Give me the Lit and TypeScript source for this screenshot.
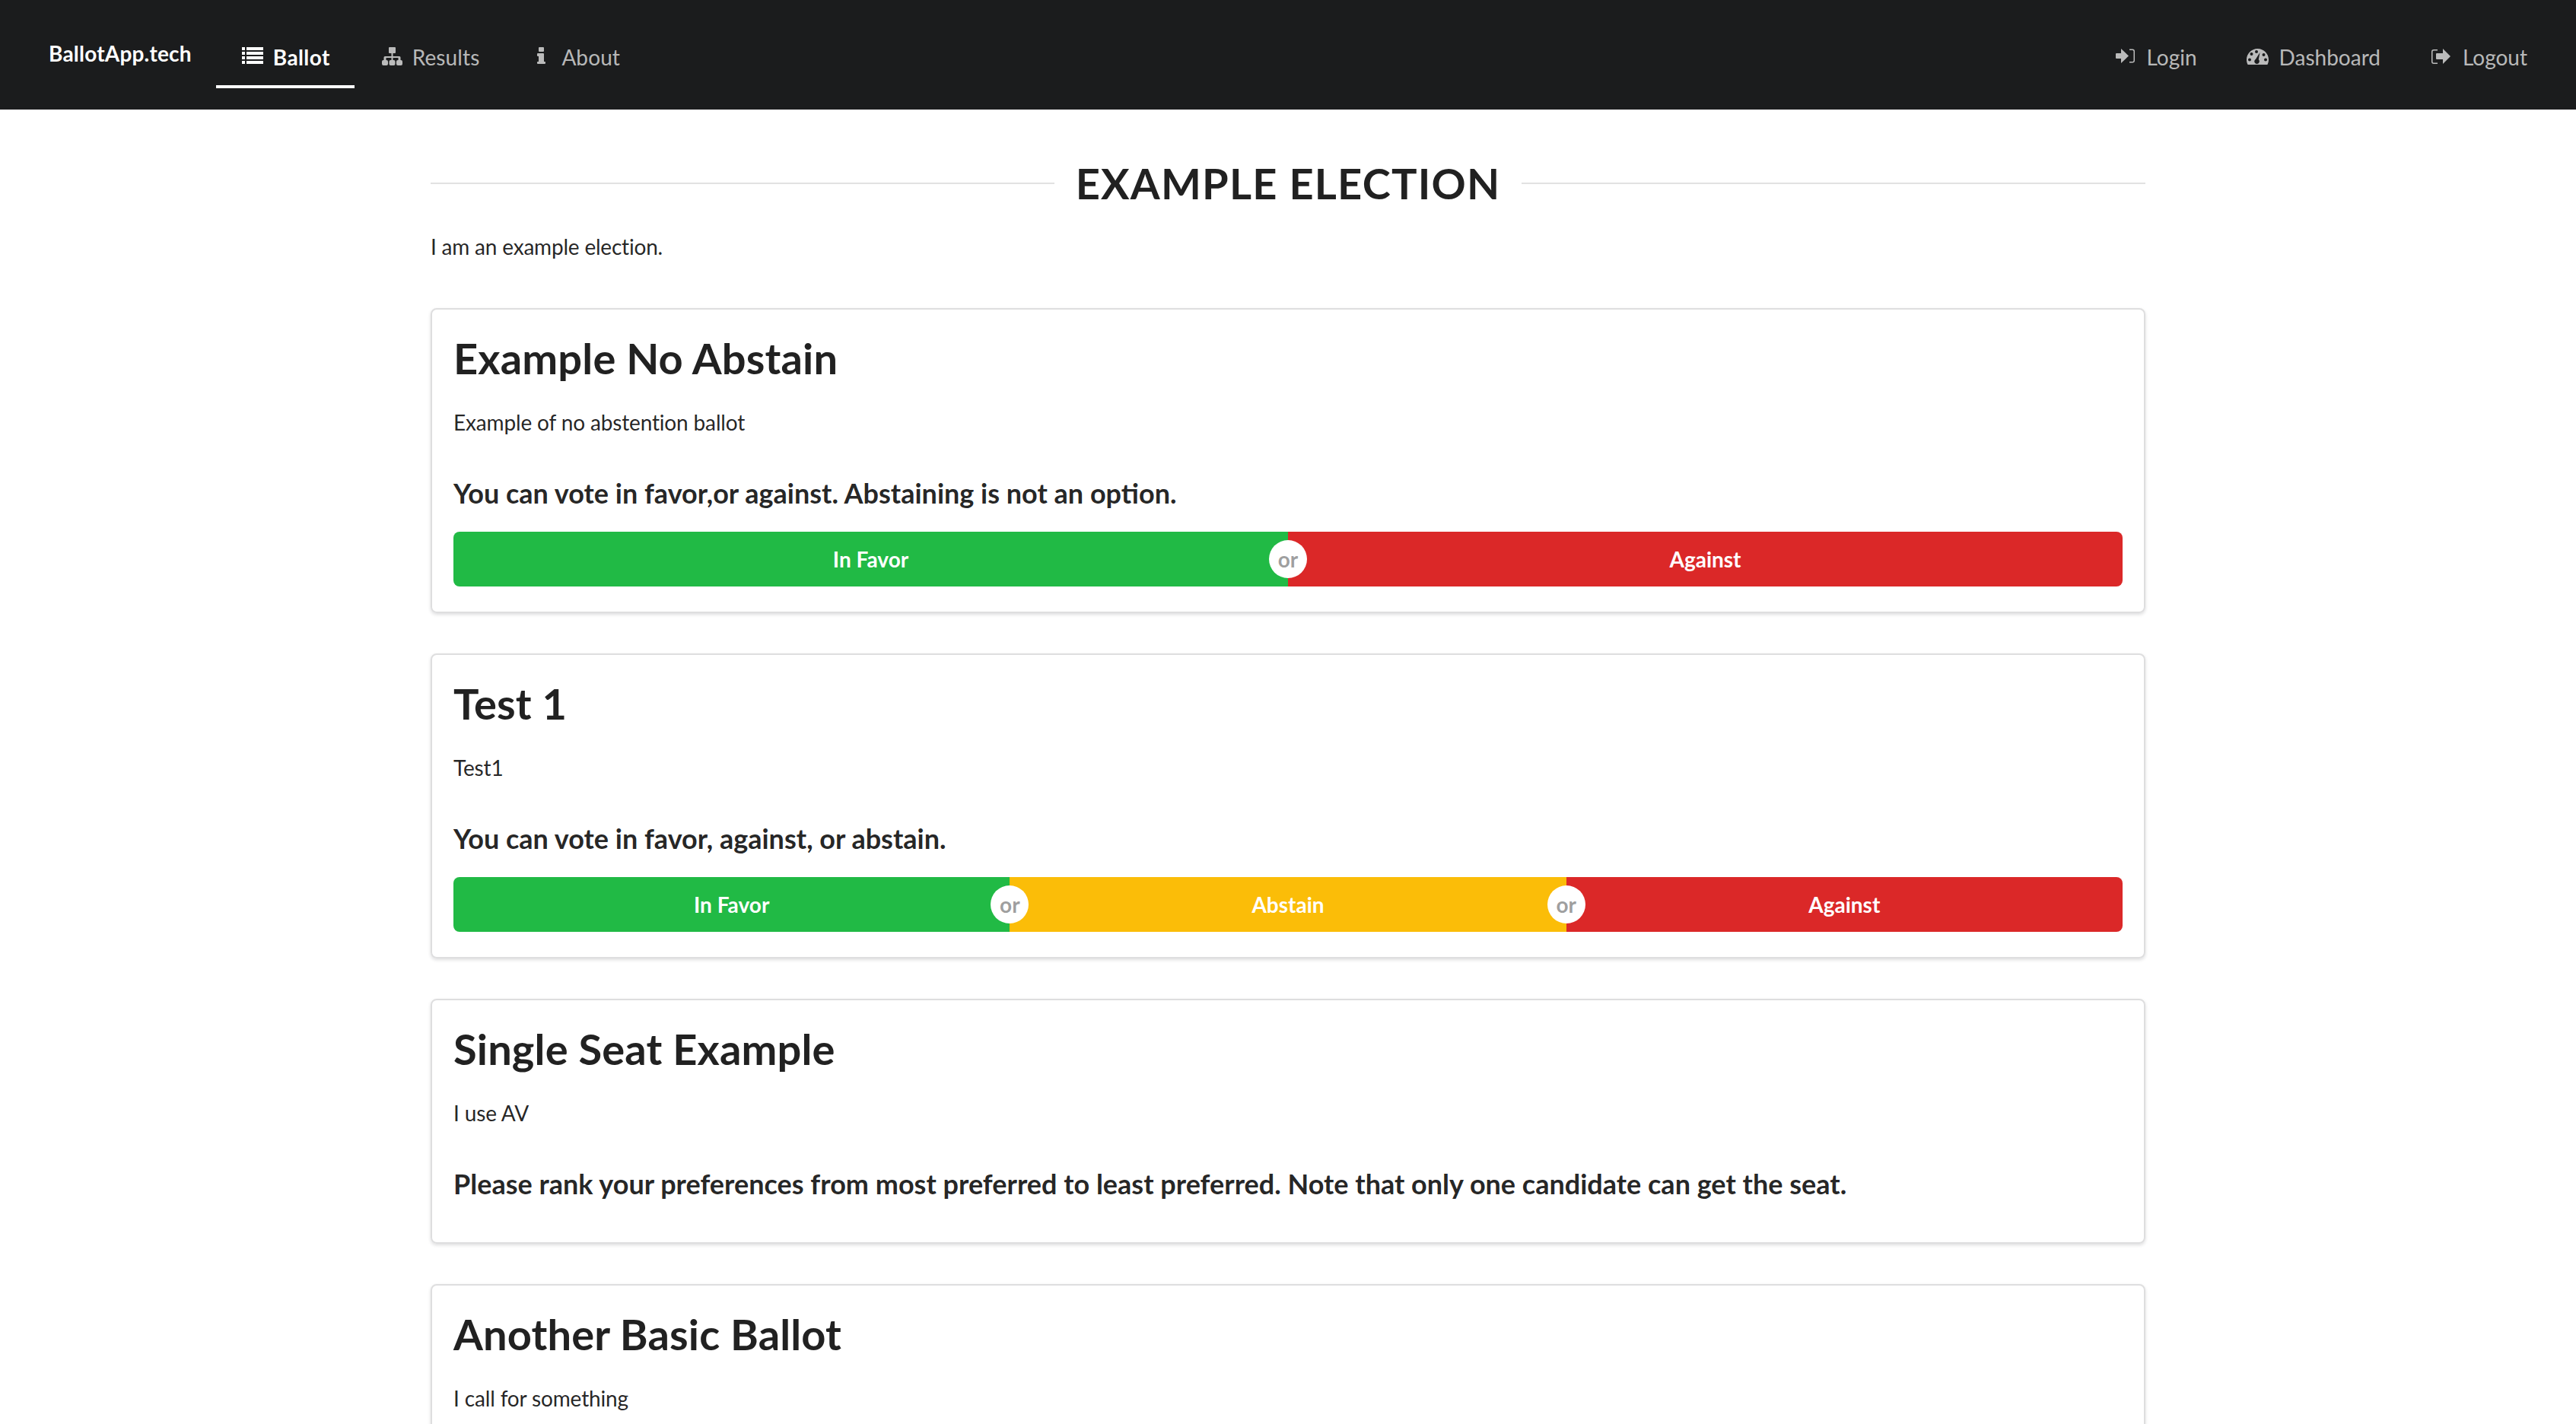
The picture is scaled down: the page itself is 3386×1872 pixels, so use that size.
import { LitElement, css, html, svg } from 'lit'
import { customElement } from 'lit/decorators.js'

const icons: Record<string, unknown> = {
  list: svg`<path d="M2 1h4v4H2zM8 1h22v4H8zM2 7h4v4H2zM8 7h22v4H8zM2 13h4v4H2zM8 13h22v4H8zM2 19h4v4H2zM8 19h22v4H8z"/>`,
  sitemap: svg`<path d="M13 1h7a1 1 0 0 1 1 1v6a1 1 0 0 1-1 1h-2.500v4H26a1.500 1.500 0 0 1 1.500 1.500V18h.5a2 2 0 0 1 2 2v3a2 2 0 0 1-2 2h-4a2 2 0 0 1-2-2v-3a2 2 0 0 1 2-2h.5v-3h-7v3h1a2 2 0 0 1 2 2v3a2 2 0 0 1-2 2h-4a2 2 0 0 1-2-2v-3a2 2 0 0 1 2-2h1v-3H8.500v3H9a2 2 0 0 1 2 2v3a2 2 0 0 1-2 2H5a2 2 0 0 1-2-2v-3a2 2 0 0 1 2-2h.5v-3.500A1.500 1.500 0 0 1 7 13h8.500V9H13a1 1 0 0 1-1-1V2a1 1 0 0 1 1-1z"/>`,
  info: svg`<path d="M14 1h5a1 1 0 0 1 1 1v4a1 1 0 0 1-1 1h-5a1 1 0 0 1-1-1V2a1 1 0 0 1 1-1zM12 9h7a1 1 0 0 1 1 1v10h1a1 1 0 0 1 1 1v1a1 1 0 0 1-1 1H12a1 1 0 0 1-1-1v-1a1 1 0 0 1 1-1h1v-7h-1a1 1 0 0 1-1-1v-2a1 1 0 0 1 1-1z"/>`,
  signin: svg`<path d="M4 9h6V3l10 9.500L10 22v-6H4a1 1 0 0 1-1-1v-5a1 1 0 0 1 1-1z"/><path d="M21 3.500h4a3 3 0 0 1 3 3v12a3 3 0 0 1-3 3h-4V20h4a1.500 1.500 0 0 0 1.500-1.500v-12A1.500 1.500 0 0 0 25 5h-4z"/>`,
  dashboard: svg`<path fill-rule="evenodd" d="M14.500 3C6.500 3 0 9.500 0 17.500c0 2.400.6 4.600 1.600 6.500h25.800c1-1.900 1.600-4.100 1.600-6.500C29 9.500 22.500 3 14.500 3zM13 5a2 2 0 1 1 0 4 2 2 0 0 1 0-4zM6.500 8a2 2 0 1 1 0 4 2 2 0 0 1 0-4zM22.500 9a2 2 0 1 1 0 4 2 2 0 0 1 0-4zM4 15.500a2 2 0 1 1 0 4 2 2 0 0 1 0-4zM25 15.500a2 2 0 1 1 0 4 2 2 0 0 1 0-4zM17.500 8l-1.700 9.300a3.300 3.300 0 1 1-3.800-.5z"/>`,
  signout: svg`<path d="M2 7a3 3 0 0 1 3-3h5v1.500H5A1.500 1.500 0 0 0 3.500 7v13A1.500 1.500 0 0 0 5 21.500h5V23H5a3 3 0 0 1-3-3z"/><path d="M9 9h8V3l10 10-10 10v-6H9a1 1 0 0 1-1-1v-6a1 1 0 0 1 1-1z"/>`,
}

const navLeft = [
  { label: 'Ballot', icon: 'list', active: true },
  { label: 'Results', icon: 'sitemap' },
  { label: 'About', icon: 'info' },
]

const navRight = [
  { label: 'Login', icon: 'signin' },
  { label: 'Dashboard', icon: 'dashboard' },
  { label: 'Logout', icon: 'signout' },
]

const ballots = [
  {
    title: 'Example No Abstain',
    desc: 'Example of no abstention ballot',
    prompt: 'You can vote in favor,or against. Abstaining is not an option.',
    choices: ['favor', 'against'],
  },
  {
    title: 'Test 1',
    desc: 'Test1',
    prompt: 'You can vote in favor, against, or abstain.',
    choices: ['favor', 'abstain', 'against'],
  },
  {
    title: 'Single Seat Example',
    desc: 'I use AV',
    prompt: 'Please rank your preferences from most preferred to least preferred. Note that only one candidate can get the seat.',
    choices: [],
  },
  {
    title: 'Another Basic Ballot',
    desc: 'I call for something',
    prompt: '',
    choices: [],
  },
]

const choiceLabels: Record<string, string> = {
  favor: 'In Favor',
  abstain: 'Abstain',
  against: 'Against',
}

@customElement('app-root')
export class AppRoot extends LitElement {
  static styles = css`
    :host {
      display: block;
      height: 1872px;
      overflow: hidden;
      background: #fff;
      font-family: Lato, 'Liberation Sans', sans-serif;
      font-size: 28px;
      line-height: 40px;
      color: rgba(0, 0, 0, 0.87);
    }
    .menu {
      display: flex;
      align-items: flex-start;
      height: 144px;
      padding: 0 32px;
      box-sizing: border-box;
      background: #1b1c1d;
    }
    .brand {
      margin-top: 28px;
      height: 84px;
      padding: 0 32px;
      display: flex;
      align-items: center;
      font-weight: 700;
      letter-spacing: 0.2px;
      color: #fff;
    }
    .item {
      margin-top: 28px;
      height: 88px;
      padding: 10px 32px 0;
      box-sizing: border-box;
      display: flex;
      align-items: center;
      border-bottom: 4px solid transparent;
      letter-spacing: 0.1px;
      color: rgba(255, 255, 255, 0.7);
    }
    .item + .item {
      margin-left: 1px;
    }
    .item.active {
      color: #fff;
      font-weight: 700;
      letter-spacing: 0.4px;
      border-bottom-color: #fff;
    }
    .item svg {
      width: 33px;
      height: 28px;
      margin-right: 10px;
      fill: currentColor;
    }
    .spacer {
      flex: 1;
    }
    .nav-right {
      display: flex;
    }
    .nav-right .item {
      letter-spacing: 0;
    }
    .page {
      width: 2254px;
      margin: 0 auto;
    }
    .title {
      display: flex;
      align-items: center;
      gap: 28px;
      margin: 0;
      padding-top: 64px;
      font-size: 56px;
      line-height: 66px;
      font-weight: 700;
      letter-spacing: 1.2px;
      color: rgba(0, 0, 0, 0.87);
      text-transform: uppercase;
    }
    .title::before,
    .title::after {
      content: '';
      flex: 1;
      height: 2px;
      background: #e2e2e2;
    }
    .intro {
      margin: 30px 0 0;
      letter-spacing: -0.2px;
    }
    .card {
      margin-top: 53px;
      padding: 28px;
      border: 2px solid #dededf;
      border-radius: 8px;
      box-shadow: 0 2px 4px rgba(34, 36, 38, 0.15);
    }
    .intro + .card {
      margin-top: 61px;
    }
    .card h2 {
      margin: 3px 0 0;
      font-size: 56px;
      line-height: 66px;
      font-weight: 700;
      letter-spacing: 0.15px;
    }
    .card p {
      margin: 31px 0 0;
      letter-spacing: -0.15px;
    }
    .card h3 {
      margin: 46px 0 22px;
      font-size: 36px;
      line-height: 54px;
      font-weight: 700;
    }
    .choices {
      display: flex;
      position: relative;
      height: 72px;
      margin: 24px 0 5px;
    }
    .card h3:has(+ .choices) {
      margin-bottom: 0;
    }
    .choice {
      flex: 1;
      display: flex;
      align-items: center;
      justify-content: center;
      position: relative;
      font-weight: 700;
      color: #fff;
    }
    .choice:first-child {
      border-radius: 8px 0 0 8px;
    }
    .choice:last-child {
      border-radius: 0 8px 8px 0;
    }
    .favor {
      background: #21ba45;
    }
    .abstain {
      background: #fbbd08;
    }
    .against {
      background: #db2828;
    }
    .or {
      position: absolute;
      right: -25px;
      top: 11px;
      z-index: 1;
      width: 50px;
      height: 50px;
      border-radius: 50%;
      background: #fff;
      display: flex;
      align-items: center;
      justify-content: center;
      color: rgba(0, 0, 0, 0.4);
      font-size: 28px;
      font-weight: 700;
    }
    .choice:last-child .or {
      display: none;
    }
  `

  navItem(n: { label: string; icon: string; active?: boolean }) {
    return html`<a class="item ${n.active ? 'active' : ''}">
      <svg viewBox="0 0 33 28">${icons[n.icon]}</svg>${n.label}
    </a>`
  }

  render() {
    return html`
      <nav class="menu">
        <a class="brand">BallotApp.tech</a>
        ${navLeft.map((n) => this.navItem(n))}
        <span class="spacer"></span>
        <div class="nav-right">${navRight.map((n) => this.navItem(n))}</div>
      </nav>
      <main class="page">
        <h1 class="title">Example Election</h1>
        <p class="intro">I am an example election.</p>
        ${ballots.map(
          (b) => html`
            <section class="card">
              <h2>${b.title}</h2>
              <p>${b.desc}</p>
              ${b.prompt ? html`<h3>${b.prompt}</h3>` : ''}
              ${b.choices.length
                ? html`<div class="choices">
                    ${b.choices.map(
                      (c) => html`<div class="choice ${c}">${choiceLabels[c]}<span class="or">or</span></div>`
                    )}
                  </div>`
                : ''}
            </section>
          `
        )}
      </main>
    `
  }
}
